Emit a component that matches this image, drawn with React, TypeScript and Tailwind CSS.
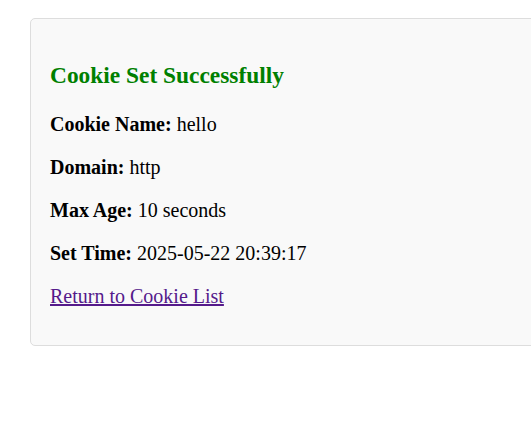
export default function App() {
  return (
    <div className="min-h-[429px] w-full overflow-hidden bg-white pl-[30px] pt-[18px] font-['Liberation_Serif','Times_New_Roman',serif] text-[20px] text-black">
      <div className="w-[750px] shrink-0 rounded-[5px] border border-[#dddddd] bg-[#f9f9f9] px-[19px] pb-[17px] pt-[20px]">
        <h3 className="mb-[24px] mt-[23px] text-[23.4px] font-bold leading-[1.15] text-[#008000]">Cookie Set Successfully</h3>
        <p className="my-[20px] leading-[1.15]">
          <strong>Cookie Name:</strong> hello
        </p>
        <p className="my-[20px] leading-[1.15]">
          <strong>Domain:</strong> http
        </p>
        <p className="my-[20px] leading-[1.15]">
          <strong>Max Age:</strong> 10 seconds
        </p>
        <p className="my-[20px] leading-[1.15]">
          <strong>Set Time:</strong> 2025-05-22 20:39:17
        </p>
        <p className="my-[20px] leading-[1.15]">
          <a href="#" className="text-[#551a8b] underline">
            Return to Cookie List
          </a>
        </p>
      </div>
    </div>
  );
}
